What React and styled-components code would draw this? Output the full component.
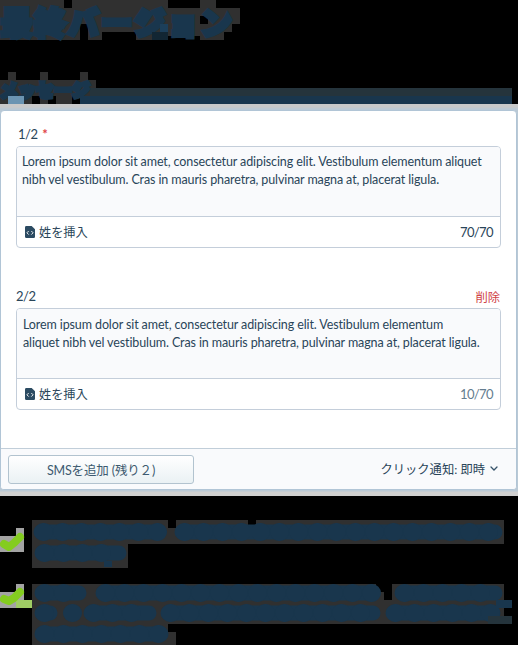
import React from "react";
import styled, { createGlobalStyle } from "styled-components";

const Global = createGlobalStyle`
  * { box-sizing: border-box; }
  html, body { margin: 0; background: #000; }
  body { width: 518px; height: 645px; overflow: hidden; font-family: Lato, "Noto Sans CJK JP", sans-serif; font-size: 12.5px; font-variant-ligatures: none; color: #294559; }
`;
const Page = styled.main`
  width: 518px;
  height: 645px;
  display: flex;
  flex-direction: column;
  overflow: hidden;
`;
const Heading = styled.header`
  height: 104px;
  position: relative;
  display: flex;
  flex-direction: column;
  gap: 33px;
`;
const Shade = styled.svg`
  position: absolute;
  inset: 0;
`;
const Title = styled.h1`
  position: relative;
  margin: 0;
  height: 40px;
  padding-left: 1px;
  font: 700 31px/41px "Noto Sans CJK JP", sans-serif;
  letter-spacing: 2.4px;
  color: #19364d;
  -webkit-text-stroke: 5px #19364d;
  white-space: nowrap;
`;
const Subtitle = styled.h2`
  position: relative;
  margin: 0;
  font: 700 18px/32px "Noto Sans CJK JP", sans-serif;
  color: #19364d;
  -webkit-text-stroke: 4px #19364d;
  white-space: nowrap;
`;
const Frame = styled.section`
  height: 392px;
  flex: none;
  padding: 6px 1px 6px 0;
  background: linear-gradient(#c9c9c9 0 3px, #bac9d5 5px 387px, #d0d0d0 388px);
`;
const Card = styled.div`
  height: 380px;
  border: 1px solid #b1c5d6;
  border-radius: 4px;
  background: #fff;
  display: flex;
  flex-direction: column;
  overflow: hidden;
`;
const Messages = styled.div`
  height: 337px;
  padding: 13px 15px 0;
  display: flex;
  flex: none;
  flex-direction: column;
  gap: 39px;
`;
const Message = styled.div`
  height: 123px;
  flex: none;
`;
const Label = styled.div`
  height: 22px;
  padding-left: ${(p) => (p.$inset ? "2px" : "0")};
  padding-right: 1px;
  display: flex;
  justify-content: space-between;
  font-size: 13px;
  letter-spacing: -0.5px;
  line-height: ${(p) => (p.$inset ? "21px" : "20px")};
`;
const Required = styled.span`
  color: #df4144;
  margin-left: 2px;
  font-weight: 700;
`;
const Remove = styled.button`
  border: 0;
  padding: 0;
  background: none;
  color: #d04447;
  font: 12.3px/18px "Noto Sans CJK JP", sans-serif;
`;
const Editor = styled.div`
  width: 485px;
  height: 102px;
  border: 1px solid #c4ceda;
  border-radius: 4px;
  overflow: hidden;
`;
const Body = styled.div`
  height: 70px;
  padding: ${(p) => (p.$second ? "7px 6px" : "6px 5px")};
  background: #f9fafc;
  border-bottom: 1px solid #c4ceda;
  line-height: 18px;
  letter-spacing: -0.108px;
  white-space: pre;
`;
const Tools = styled.div`
  height: 30px;
  padding: 0 7px 0 8px;
  display: flex;
  align-items: center;
  justify-content: space-between;
`;
const Insert = styled.span`
  display: flex;
  align-items: center;
  gap: 4px;
  font-size: 12.2px;
`;
const Count = styled.span`
  font-size: 13px;
  letter-spacing: -0.6px;
  color: ${(p) => (p.$muted ? "#647d90" : "#294559")};
`;
const Footer = styled.footer`
  height: 41px;
  flex: none;
  padding: 6px 18px 6px 7px;
  display: flex;
  align-items: center;
  justify-content: space-between;
  border-top: 1px solid #c1ced9;
  background: #f9fafc;
`;
const Add = styled.button`
  width: 186px;
  height: 29px;
  padding: 0;
  border: 1px solid #b2c3cf;
  border-radius: 3px;
  background: linear-gradient(#fff, #eaf1f4);
  color: #3d5a70;
  font: 12.5px Lato, "Noto Sans CJK JP", sans-serif;
  letter-spacing: -0.15px;
`;
const Notice = styled.span`
  display: flex;
  align-items: center;
  gap: 5px;
  font-size: 12.3px;
`;
const Notes = styled.svg`
  display: block;
  flex: none;
`;

const FileCode = () => (
  <svg width="10" height="12" viewBox="0 0 10 12">
    <path d="M1.4 0H6.7L10 3.2V10.7Q10 12 8.7 12H1.4Q0 12 0 10.7V1.3Q0 0 1.4 0Z" fill="#2c4b62" />
    <path d="M3.7 5 1.9 6.8 3.7 8.6M6.3 5 8.1 6.8 6.3 8.6" fill="none" stroke="#fff" strokeWidth=".9" />
  </svg>
);
const Chevron = () => (
  <svg width="8" height="6" viewBox="0 0 8 6">
    <path d="m1 1 3 3 3-3" fill="none" stroke="#36536a" strokeWidth="1.3" strokeLinecap="round" />
  </svg>
);

function MessageEditor({ label, required, removable, text, count, muted }) {
  return (
    <Message>
      <Label $inset={required}>
        <span>{label} {required && <Required>*</Required>}</span>
        {removable && <Remove>削除</Remove>}
      </Label>
      <Editor>
        <Body $second={removable}>{text}</Body>
        <Tools>
          <Insert><FileCode />姓を挿入</Insert>
          <Count $muted={muted}>{count}</Count>
        </Tools>
      </Editor>
    </Message>
  );
}

const ink = [
  [34, 532, 166, 10], [175, 532, 502, 10],
  [35, 553, 126, 10],
  [35, 593, 86, 10], [96, 593, 380, 10], [395, 593, 502, 10],
  [35, 613, 57, 10], [64, 613, 79, 10], [84, 613, 156, 10], [161, 613, 380, 10], [386, 613, 500, 10],
  [35, 634, 168, 10],
];

export default function App() {
  return (
    <Page>
      <Global />
      <Heading>
        <Shade width="518" height="104" shapeRendering="crispEdges">
          <path fill="#303030" d="M0 0H64V8H72V0H168V8H200V0H216V8H240V24H232V32H224V40H200V36H168V40H136V32H102V40H88V24H80V40H0ZM200 16V24H208V16Z" fillRule="evenodd" />
          <path fill="#303030" d="M8 72H16V80H40V72H48V80H80V72H88V80H96V88H90V96H72V104H56V96H48V104H40V96H32V104H0V80H8Z" />
          <path fill="#25343c" d="M90 88H512V96H90Z" />
          <path fill="#19364d" d="M80 96H512V104H80Z" />
        </Shade>
        <Title>最終バージョン</Title>
        <Subtitle>メッセージ</Subtitle>
        <Shade width="518" height="104" shapeRendering="crispEdges">
          <path fill="#6b94b2" d="M8 96H24V104H8Z" />
          <path fill="#1c3f5a" d="M160 24H168V32H160Z" />
          <path fill="#122633" d="M152 32H168V40H152Z" />
        </Shade>
      </Heading>
      <Frame>
        <Card>
          <Messages>
            <MessageEditor label="1/2" required count="70/70"
              text={"Lorem ipsum dolor sit amet, consectetur adipiscing elit. Vestibulum elementum aliquet\nnibh vel vestibulum. Cras in mauris pharetra, pulvinar magna at, placerat ligula."} />
            <MessageEditor label="2/2" removable muted count="10/70"
              text={"Lorem ipsum dolor sit amet, consectetur adipiscing elit. Vestibulum elementum\naliquet nibh vel vestibulum. Cras in mauris pharetra, pulvinar magna at, placerat ligula."} />
          </Messages>
          <Footer>
            <Add>SMSを追加 (残り２)</Add>
            <Notice>クリック通知: 即時 <Chevron /></Notice>
          </Footer>
        </Card>
      </Frame>
      <Notes width="518" height="149" viewBox="0 496 518 149">
        <g fill="#303030" shapeRendering="crispEdges">
          <path d="M32 520H168V528H176V520H248V528H256V520H504V544H128V568H32Z" />
          <path d="M32 584H376V592H384V600H392V584H504V624H168V632H176V645H32Z" />
        </g>
        <g fill="#a3a3a3" shapeRendering="crispEdges">
          <path d="M16 528H24V552H0V536H16Z" />
          <path d="M16 584H24V608H0V592H16Z" />
        </g>
        <path fill="#9fcc64" d="M16 600H32V608H16Z" />
        <g fill="none" stroke="#84cc20" strokeLinecap="round" strokeLinejoin="round" strokeWidth="8">
          <path d="M4 544 9 547 14 543 20 537" />
          <path d="M4 599 9 601 14 598 20 592" />
        </g>
        <g stroke="#19364d" strokeLinecap="round">
          {ink.map(([x, y, end, r], i) => (
            <g key={i}>
              <path d={`M${x + 7} ${y}H${end - 7}`} strokeWidth="15" />
              <path d={`M${x + 9} ${y}H${end - 8}`} strokeWidth="18" strokeDasharray={`1 ${r + 8}`} />
            </g>
          ))}
        </g>
        <g fill="#19364d">
          <path d="M246 528H260V536H246ZM104 561H112V567H104ZM496 600H512V608H496Z" />
          <path fill="#25343c" d="M488 616H512V624H488Z" />
        </g>
      </Notes>
    </Page>
  );
}
